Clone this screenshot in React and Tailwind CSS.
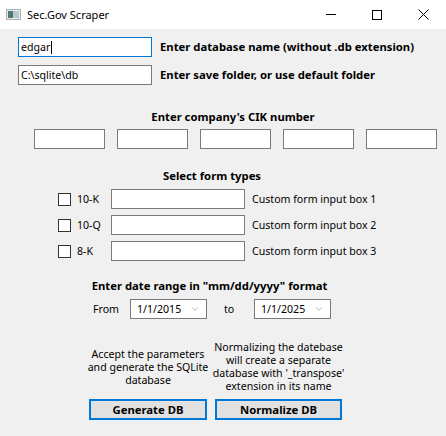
import { ChevronDown } from "lucide-react";

const TextBox = ({ value, className = "", focused = false }) => (
    <div
        className={`h-[20px] bg-white border flex items-center px-[2px] text-[10.6px] ${
            focused ? "border-[#0078d7]" : "border-[#7a7a7a]"
        } ${className}`}
    >
        {value}
        {focused && <span className="w-px h-[13px] bg-black ml-px" />}
    </div>
);

const FormRow = ({ label, box }) => (
    <div className="flex items-center h-[20px] pl-[58px]">
        <div className="w-[13px] h-[13px] border border-[#333] bg-white" />
        <span className="ml-[6px] w-[34px]">{label}</span>
        <TextBox className="w-[134px]" />
        <span className="ml-[7px]">Custom form input box {box}</span>
    </div>
);

const DateBox = ({ value }) => (
    <div className="w-[77px] h-[20px] bg-white border border-[#7a7a7a] flex items-center pl-[6px] pr-[6px]">
        <span className="flex-1">{value}</span>
        <ChevronDown className="w-[10px] h-[10px] text-[#707070]" strokeWidth={1.25} />
    </div>
);

export default function App() {
    return (
        <div className="w-[446px] h-[436px] bg-[#f0f0f0] flex flex-col text-[10.6px] text-black font-['Noto_Sans',sans-serif] leading-none overflow-hidden">
            {/* Title bar */}
            <div className="h-[29px] bg-white flex items-center shrink-0">
                <svg width="15" height="11" viewBox="0 0 15 11" className="ml-[6px]">
                    <rect x="0.5" y="0.5" width="14" height="10" fill="#e8ecec" stroke="#a9b2b2" />
                    <rect x="2" y="2" width="5" height="7" fill="#4d7a78" />
                    <rect x="7" y="2" width="6" height="7" fill="#b9c9c7" />
                </svg>
                <span className="ml-[6px] text-[11px]">Sec.Gov Scraper</span>
                <div className="ml-auto flex h-full">
                    <div className="w-[46px] h-full flex items-center justify-center">
                        <div className="w-[10px] h-px bg-black" />
                    </div>
                    <div className="w-[46px] h-full flex items-center justify-center">
                        <div className="w-[10px] h-[10px] border border-black" />
                    </div>
                    <div className="w-[46px] h-full flex items-center justify-center">
                        <svg width="11" height="11" viewBox="0 0 11 11">
                            <path d="M0.5 0.5 L10.5 10.5 M10.5 0.5 L0.5 10.5" stroke="#000" strokeWidth="1" />
                        </svg>
                    </div>
                </div>
            </div>

            {/* DB name + folder */}
            <div className="flex items-center pl-[18px] mt-[8px]">
                <TextBox value="edgar" focused className="w-[134px]" />
                <span className="ml-[8px] font-bold text-[11.3px]">Enter database name (without .db extension)</span>
            </div>
            <div className="flex items-center pl-[18px] mt-[8px]">
                <TextBox value="C:\sqlite\db" className="w-[134px]" />
                <span className="ml-[8px] font-bold text-[11.3px]">Enter save folder, or use default folder</span>
            </div>

            {/* CIK */}
            <div className="mt-[26px] ml-[34px] w-[398px] h-[12px] text-center font-bold text-[11.3px]">
                Enter company's CIK number
            </div>
            <div className="flex gap-[12px] pl-[34px] mt-[6px]">
                {[0, 1, 2, 3, 4].map((i) => (
                    <TextBox key={i} className="w-[71px]" />
                ))}
            </div>

            {/* Form types */}
            <div className="mt-[21px] w-[424px] h-[12px] text-center font-bold text-[11.3px]">Select form types</div>
            <div className="flex flex-col gap-[6px] mt-[7px]">
                <FormRow label="10-K" box="1" />
                <FormRow label="10-Q" box="2" />
                <FormRow label="8-K" box="3" />
            </div>

            {/* Date range */}
            <div className="mt-[19px] w-[419px] h-[12px] text-center font-bold text-[11.3px]">
                Enter date range in "mm/dd/yyyy" format
            </div>
            <div className="flex items-center mt-[7px] pl-[93px]">
                <span className="w-[37px]">From</span>
                <DateBox value="1/1/2015" />
                <span className="ml-[17px] w-[30px]">to</span>
                <DateBox value="1/1/2025" />
            </div>

            {/* Actions */}
            <div className="flex gap-[8px] pl-[89px] mt-[22px] items-center leading-[13px] text-center">
                <div className="w-[118px] flex justify-center">
                    <div className="whitespace-nowrap">
                        Accept the parameters
                        <br />
                        and generate the SQLite
                        <br />
                        database
                    </div>
                </div>
                <div className="w-[127px] flex justify-center">
                    <div className="whitespace-nowrap">
                        Normalizing the datebase
                        <br />
                        will create a separate
                        <br />
                        database with '_transpose'
                        <br />
                        extension in its name
                    </div>
                </div>
            </div>
            <div className="flex gap-[8px] pl-[89px] mt-[6px]">
                <button className="w-[118px] h-[21px] bg-[#e1e1e1] border-2 border-[#0078d7] font-bold text-[11.3px]">
                    Generate DB
                </button>
                <button className="w-[127px] h-[21px] bg-[#e1e1e1] border-2 border-[#0078d7] font-bold text-[11.3px]">
                    Normalize DB
                </button>
            </div>
        </div>
    );
}
